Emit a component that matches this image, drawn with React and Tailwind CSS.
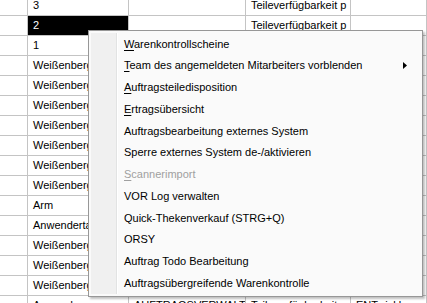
import React from 'react';

const rows = [
  { a: '3', c: 'Teileverfügbarkeit p' },
  { a: '2', c: 'Teileverfügbarkeit p', selected: true },
  { a: '1' },
  { a: 'Weißenberg' },
  { a: 'Weißenberg' },
  { a: 'Weißenberg' },
  { a: 'Weißenberg' },
  { a: 'Weißenberg' },
  { a: 'Weißenberg' },
  { a: 'Weißenberg' },
  { a: 'Arm' },
  { a: 'Anwendertabelle' },
  { a: 'Weißenberg' },
  { a: 'Weißenberg' },
  { a: 'Weißenberg' },
  { a: 'Anwender', b: 'AUFTRAGSVERWALT', c: 'Teileverfügbarkeit', d: 'ENTwicklung' },
];

const items = [
  { label: 'Warenkontrollscheine', key: 'W' },
  { label: 'Team des angemeldeten Mitarbeiters vorblenden', key: 'T', sub: true },
  { label: 'Auftragsteiledisposition', key: 'A' },
  { label: 'Ertragsübersicht', key: 'E' },
  { label: 'Auftragsbearbeitung externes System' },
  { label: 'Sperre externes System de-/aktivieren' },
  { label: 'Scannerimport', key: 'S', disabled: true },
  { label: 'VOR Log verwalten' },
  { label: 'Quick-Thekenverkauf (STRG+Q)' },
  { label: 'ORSY' },
  { label: 'Auftrag Todo Bearbeitung' },
  { label: 'Auftragsübergreifende Warenkontrolle' },
];

const Cell = ({ w, children, selected }) => (
  <div
    className={`${w} shrink-0 h-full border-r border-[#c4c4c4] pl-[5px] overflow-hidden whitespace-nowrap leading-[19px] ${
      selected ? 'bg-black text-white' : ''
    }`}
  >
    {children}
  </div>
);

const App = () => {
  return (
    <div
      className="relative w-[427px] h-[303px] overflow-hidden bg-white text-black text-[11px]"
      style={{ fontFamily: '"Liberation Sans", Arial, sans-serif' }}
    >
      <div className="flex flex-col mt-[-4px]">
        {rows.map((r, i) => (
          <div key={i} className="flex h-[20px] shrink-0 border-b border-[#c4c4c4]">
            <Cell w="w-[28px]" />
            <Cell w="w-[101px]" selected={r.selected}>{r.a}</Cell>
            <Cell w="w-[117px]">{r.b}</Cell>
            <Cell w="w-[105px]">{r.c}</Cell>
            <Cell w="flex-1">{r.d}</Cell>
          </div>
        ))}
      </div>

      {/* context menu */}
      <div className="absolute left-[88px] top-[30px] w-[335px] h-[267px] border border-[#979797] bg-[#fafafa] shadow-[2px_2px_2px_rgba(0,0,0,0.25)] flex p-[2px]">
        <div className="w-[26px] shrink-0 bg-[#f0f0f0] border-r border-[#e2e3e3] shadow-[1px_0_0_#ffffff]" />
        <div className="flex-1 flex flex-col">
          {items.map((it, i) => (
            <div key={i} className="h-[22px] flex items-center pl-[7px] pr-[12px]">
              <span className={`flex-1 whitespace-nowrap ${it.disabled ? 'text-[#a0a0a0]' : ''}`}>
                {it.key ? (
                  <>
                    <span className="underline underline-offset-[2px]">{it.label[0]}</span>
                    {it.label.slice(1)}
                  </>
                ) : (
                  it.label
                )}
              </span>
              {it.sub && (
                <svg width="4" height="7" viewBox="0 0 4 7" className="mr-[1px]">
                  <path d="M0 0 L4 3.5 L0 7 Z" fill="#000" />
                </svg>
              )}
            </div>
          ))}
        </div>
      </div>
    </div>
  );
};

export default App;
